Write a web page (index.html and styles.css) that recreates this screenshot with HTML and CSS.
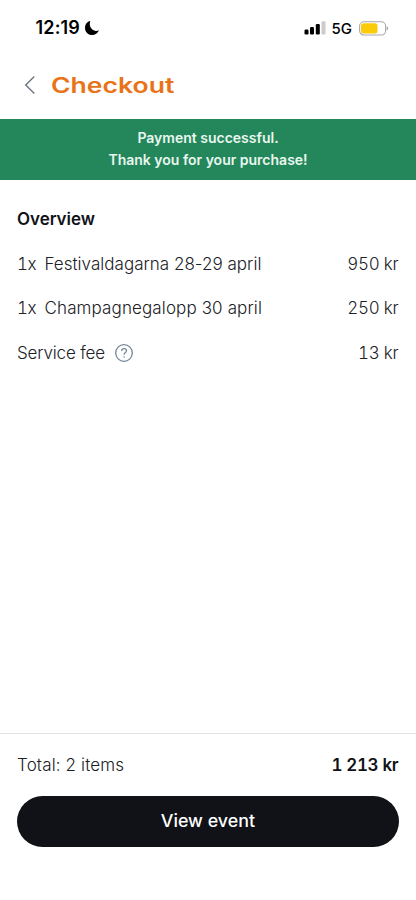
FILE: index.html
```html
<!DOCTYPE html>
<html lang="en">
<head>
<meta charset="utf-8">
<meta name="viewport" content="width=device-width, initial-scale=1">
<title>Checkout</title>
<link rel="stylesheet" href="styles.css">
</head>
<body>
<div class="screen">
  <div class="status">
    <span class="time">12:19</span>
    <svg class="moon" width="16" height="16" viewBox="0 0 16 16"><path d="M6.300 1C3.200 1.500 1 4.500 1 7.900c0 4 3.200 7.100 7.100 7.100 3 0 5.700-1.800 6.900-4.700-.9.500-1.900.6-2.800.6C8.800 10.900 5.800 8 5.800 4.100c0-1.100.1-2.200.5-3.100z"/></svg>
    <svg class="signal" width="22" height="14" viewBox="0 0 22 14"><rect x="0.500" y="8.500" width="4" height="5" rx="1.200"/><rect x="6" y="6" width="4" height="7.500" rx="1.200"/><rect x="11.800" y="3" width="4" height="10.500" rx="1.200"/><rect class="off" x="17.500" y="0.200" width="4" height="13.300" rx="1.200"/></svg>
    <span class="network">5G</span>
    <svg class="battery" width="30" height="15" viewBox="0 0 30 15"><rect class="case" x=".6" y=".8" width="26" height="13.200" rx="4.300"/><rect class="charge" x="2" y="2.300" width="16.500" height="10.200" rx="2.800"/><path class="tip" d="M27.800 5.200v4.400c1.500-.6 1.500-3.800 0-4.400z"/></svg>
  </div>
  <header class="header">
    <svg class="back" width="12" height="20" viewBox="0 0 12 20"><path d="M10.300 1.500 1.700 10l8.600 8.500"/></svg>
    <h1 class="title">Checkout</h1>
  </header>
  <div class="banner"><p class="paid">Payment successful.</p><p class="thanks">Thank you for your purchase!</p></div>
  <main class="overview">
    <h2 class="heading">Overview</h2>
    <div class="row"><span class="qty">1x</span><span class="name festival">Festivaldagarna 28-29 april</span><span class="price">950 kr</span></div>
    <div class="row"><span class="qty">1x</span><span class="name gala">Champagnegalopp 30 april</span><span class="price">250 kr</span></div>
    <div class="row"><span class="fee">Service fee</span><svg class="help" width="20" height="20" viewBox="0 0 20 20"><circle cx="10" cy="10" r="8.300"/><path d="M7.700 8.100V7.700c0-1.300 1-2.100 2.400-2.100s2.400.8 2.400 2.100c0 1.900-2.400 1.800-2.400 3.800v.3M10.100 13.300v1.200"/></svg><span class="price">13 kr</span></div>
  </main>
  <footer class="footer">
    <div class="total"><span class="items">Total: 2 items</span><strong class="sum">1 213 kr</strong></div>
    <button class="button" type="button"><span class="label">View event</span></button>
  </footer>
</div>
</body>
</html>
```
FILE: styles.css
```css
* { box-sizing: border-box; }
body { margin: 0; background: #fff; color: #202126; font-family: Inter, sans-serif; }
h1, h2, p { margin: 0; }
svg { display: block; flex: none; }
.screen { height: 900px; display: flex; flex-direction: column; overflow: hidden; }
.status { height: 56px; display: flex; align-items: center; padding: 0 27.500px 0 35.500px; color: #000; }
.time { font-size: 18px; font-weight: 600; line-height: 22px; letter-spacing: .15px; }
.moon { margin-left: 4px; }
.signal { margin-left: auto; }
.off { fill: #ccc; }
.network { margin-left: 6px; padding-top: 1px; font-size: 15px; font-weight: 500; line-height: 20px; }
.battery { margin-left: 6.500px; }
.case { fill: #fff; stroke: #a7a8ad; stroke-width: 1.1; }
.charge { fill: #fbcb0a; }
.tip { fill: #8e8f94; }
.header { height: 62.500px; display: flex; align-items: center; padding: 0 24px 5px; }
.back { fill: none; stroke: #6c7485; stroke-width: 1.4; }
.title { margin-left: 15px; padding-top: 2px; color: #e87318; font-size: 21px; font-weight: 600; line-height: 30px; transform: scaleX(1.265); transform-origin: left; }
.banner { height: 61.500px; padding: 8.500px 0; background: #24875b; color: #e9f7ef; text-align: center; font-size: 14px; font-weight: 600; line-height: 22px; }
.overview { flex: 1; padding: 28px 17px 0; }
.heading { color: #111217; font-size: 17px; font-weight: 600; line-height: 23px; margin-bottom: 10.500px; letter-spacing: -.05px; }
.row { height: 44.5px; display: flex; align-items: center; font-size: 17px; font-weight: 300; line-height: 24px; white-space: pre; }
.qty { width: 27.5px; font-variant-numeric: tabular-nums; letter-spacing: -.6px; }
.festival { letter-spacing: .02px; }
.gala { letter-spacing: .12px; }
.fee { letter-spacing: -.16px; }
.help { margin-left: 9px; fill: none; stroke: #758699; stroke-width: 1.3; }
.price { margin-left: auto; font-variant-numeric: tabular-nums; letter-spacing: -.3px; margin-right: .8px; }
.footer { height: 167px; border-top: 1px solid #e2e3e5; padding: 19px 17px 0; }
.total { display: flex; justify-content: space-between; font-size: 17px; font-weight: 300; line-height: 24px; font-variant-numeric: tabular-nums; }
.items { letter-spacing: .15px; }
.sum { color: #111217; font-weight: 600; letter-spacing: -.35px; margin-right: .8px; }
.button { display: block; width: 100%; height: 51px; margin-top: 18.500px; padding: 0; border: 0; border-radius: 26px; background: #111217; color: #fff; font: 500 17px/24px Inter, sans-serif; }
.label { display: inline-block; transform: scaleX(1.05); }
```
